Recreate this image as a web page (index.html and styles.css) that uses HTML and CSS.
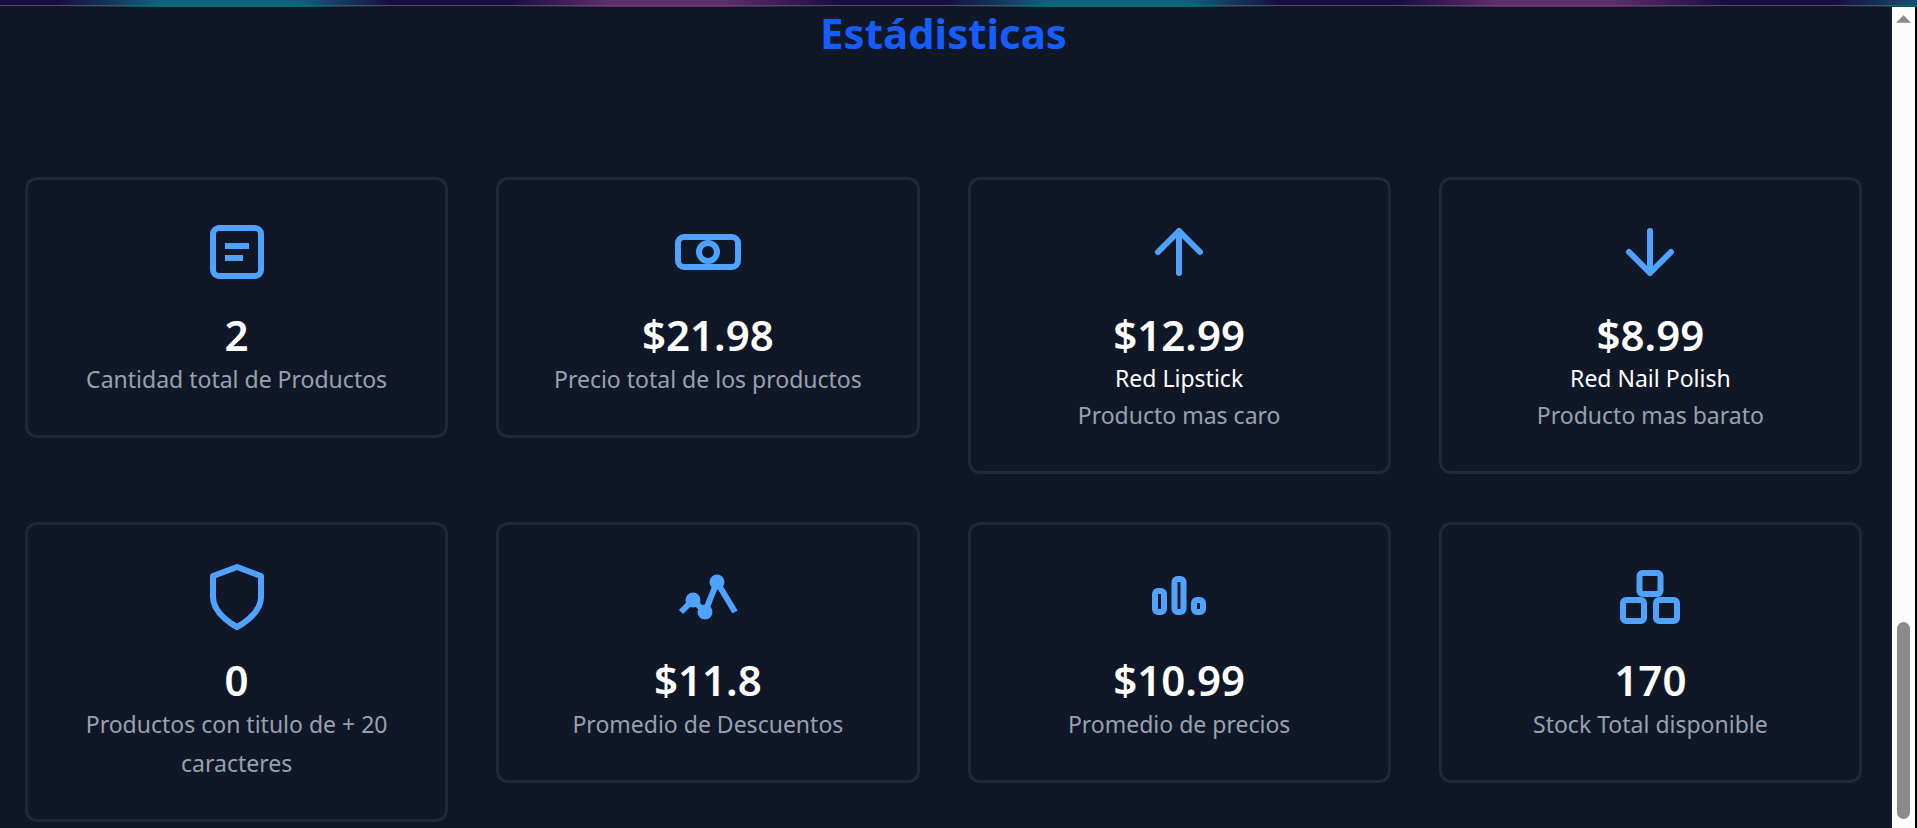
FILE: index.html
```html
<!DOCTYPE html>
<html lang="es">
<head>
<meta charset="utf-8">
<meta name="viewport" content="width=device-width, initial-scale=1">
<title>Estádisticas</title>
<link rel="stylesheet" href="styles.css">
</head>
<body>
<div class="topbar"></div>
<div class="viewport">
  <main class="page">
    <h1 class="title">Estádisticas</h1>
    <section class="stats">
      <article class="card">
        <svg class="icon" viewBox="0 0 24 24" aria-hidden="true"><rect x="4" y="4" width="16" height="16" rx="2"/><path d="M8 10h8M8 14h6"/></svg>
        <h2 class="value">2</h2>
        <p class="label">Cantidad total de Productos</p>
      </article>
      <article class="card">
        <svg class="icon" viewBox="0 0 24 24" aria-hidden="true"><rect x="2" y="7" width="20" height="10" rx="2"/><circle cx="12" cy="12" r="3"/></svg>
        <h2 class="value">$21.98</h2>
        <p class="label">Precio total de los productos</p>
      </article>
      <article class="card">
        <svg class="icon round" viewBox="0 0 24 24" aria-hidden="true"><path d="M12 19V5M5 12l7-7 7 7"/></svg>
        <h2 class="value">$12.99</h2>
        <p class="name">Red Lipstick</p>
        <p class="label">Producto mas caro</p>
      </article>
      <article class="card">
        <svg class="icon round" viewBox="0 0 24 24" aria-hidden="true"><path d="M12 5v14M19 12l-7 7-7-7"/></svg>
        <h2 class="value">$8.99</h2>
        <p class="name">Red Nail Polish</p>
        <p class="label">Producto mas barato</p>
      </article>
      <article class="card">
        <svg class="icon round" viewBox="0 0 24 24" aria-hidden="true"><path d="M12 22s8-4 8-10V5l-8-3-8 3v7c0 6 8 10 8 10z"/></svg>
        <h2 class="value">0</h2>
        <p class="label">Productos con titulo de + 20 caracteres</p>
      </article>
      <article class="card">
        <svg class="icon" viewBox="0 0 24 24" aria-hidden="true"><path d="M3 17l4-4 4 4 4-10 6 10"/><g class="dots"><circle cx="7" cy="13" r="2.5"/><circle cx="11" cy="17" r="2.5"/><circle cx="15" cy="7" r="2.5"/></g></svg>
        <h2 class="value">$11.8</h2>
        <p class="label">Promedio de Descuentos</p>
      </article>
      <article class="card">
        <svg class="icon" viewBox="0 0 24 24" aria-hidden="true"><rect x="4" y="10" width="3" height="7" rx="1"/><rect x="10.5" y="6" width="3" height="11" rx="1"/><rect x="17" y="13" width="3" height="4" rx="1"/></svg>
        <h2 class="value">$10.99</h2>
        <p class="label">Promedio de precios</p>
      </article>
      <article class="card">
        <svg class="icon" viewBox="0 0 24 24" aria-hidden="true"><rect x="8.5" y="4" width="7" height="7" rx="1"/><rect x="3" y="13" width="7" height="7" rx="1"/><rect x="14" y="13" width="7" height="7" rx="1"/></svg>
        <h2 class="value">170</h2>
        <p class="label">Stock Total disponible</p>
      </article>
    </section>
  </main>
  <div class="scrollbar" aria-hidden="true">
    <svg class="scroll-up" viewBox="0 0 16 8"><path d="M8 0l8 8H0z"/></svg>
    <div class="scroll-thumb"></div>
  </div>
</div>
</body>
</html>
```
FILE: styles.css
```css
* {
  box-sizing: border-box;
  margin: 0;
}

body {
  display: flex;
  flex-direction: column;
  height: 100vh;
  overflow: hidden;
  background: #101828;
  color: #fff;
  font-family: "Segoe UI", "Noto Sans", "Open Sans", sans-serif;
}

.topbar {
  flex: none;
  height: 7px;
  background:
    linear-gradient(#4b4a68, #4b4a68) 0 5px / 100% 1px no-repeat,
    repeating-linear-gradient(90deg,
      #180f40 0, #180f40 60px, #10607a 160px, #10607a 300px,
      #180f40 390px, #180f40 510px, #642c68 610px, #642c68 720px,
      #180f40 840px, #180f40 888px);
}

.viewport {
  flex: 1;
  display: flex;
  min-height: 0;
  border-right: 2px solid #000;
}

.page {
  flex: 1;
  min-width: 0;
  padding: 0 30px 0 25px;
}

.title {
  margin-bottom: 118px;
  color: #155dfc;
  font-size: 42px;
  font-weight: 700;
  line-height: 52px;
  text-align: center;
}

.stats {
  display: grid;
  grid-template-columns: repeat(4, 1fr);
  gap: 48px;
  align-items: start;
}

.card {
  padding: 36px 24px;
  border: 3px solid #1e2939;
  border-radius: 12px;
  text-align: center;
}

.icon {
  display: block;
  width: 72px;
  height: 72px;
  margin: 0 auto 22px;
  fill: none;
  stroke: #50a2ff;
  stroke-width: 2;
}

.round {
  stroke-linecap: round;
  stroke-linejoin: round;
}

.dots {
  fill: #50a2ff;
  stroke: none;
}

.value {
  font-size: 42px;
  font-weight: 600;
  line-height: 50px;
}

.name {
  font-size: 23px;
  line-height: 36px;
}

.label {
  color: #99a1af;
  font-size: 23px;
  line-height: 39px;
}

.scrollbar {
  flex: none;
  display: flex;
  flex-direction: column;
  align-items: center;
  justify-content: space-between;
  width: 23px;
  padding: 8px 0 9px;
  background: #fcfcfc;
}

.scroll-up {
  width: 15px;
  height: 8px;
  fill: #8b8b8b;
}

.scroll-thumb {
  width: 13px;
  height: 197px;
  border-radius: 7px;
  background: #8b8b8b;
}
```
